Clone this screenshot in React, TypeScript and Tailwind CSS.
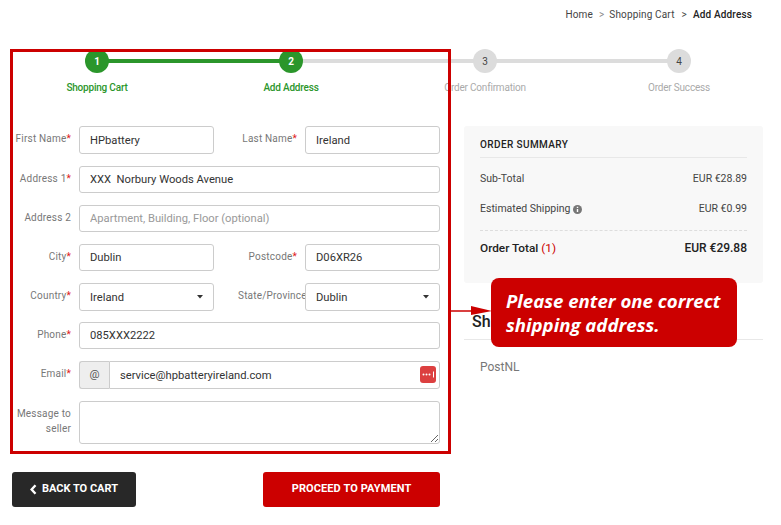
const steps = [
  { n: 1, label: "Shopping Cart", done: true },
  { n: 2, label: "Add Address", done: true },
  { n: 3, label: "Order Confirmation", done: false },
  { n: 4, label: "Order Success", done: false },
];

const inputClass =
  "w-full h-full min-w-0 rounded-[3px] border border-[#ccc] bg-white px-[10px] text-[11.2px] text-[#333] outline-none placeholder:text-[#999]";

const Label = ({ text, required, wide }: { text: string; required?: boolean; wide?: boolean }) => (
  <label
    className={`flex shrink-0 justify-end whitespace-nowrap pt-[3px] pr-2 text-[10px] leading-[20px] tracking-[0.2px] text-[#777] ${wide ? "w-[91px]" : "w-[67px]"}`}
  >
    {text}
    {required && <span className="text-[#e02020]">*</span>}
  </label>
);

const Caret = () => (
  <svg className="pointer-events-none absolute right-[11px] top-[12px]" width="6" height="4" viewBox="0 0 6 4">
    <path d="M0 0h6L3 3.5z" fill="#333" />
  </svg>
);

const Select = ({ value }: { value: string }) => (
  <div className="relative h-full flex-1">
    <select className={`${inputClass} appearance-none pt-[2px]`} defaultValue={value}>
      <option>{value}</option>
    </select>
    <Caret />
  </div>
);

const PasswordKey = () => (
  <svg className="absolute right-[4px] top-[5px]" width="16" height="17" viewBox="0 0 16 17">
    <rect width="16" height="17" rx="3" fill="#dc4040" />
    <circle cx="3.5" cy="8.5" r="1" fill="#fff" />
    <circle cx="6.5" cy="8.5" r="1" fill="#fff" />
    <circle cx="9.5" cy="8.5" r="1" fill="#fff" />
    <path d="M13.5 5.5v6" stroke="#fff" strokeWidth="1" />
  </svg>
);

const InfoDot = () => (
  <svg width="9" height="9" viewBox="0 0 9 9">
    <circle cx="4.5" cy="4.5" r="4.5" fill="#777" />
    <path d="M4.5 1.8v1.2M4.5 3.9v3.2" stroke="#fff" strokeWidth="1.4" />
  </svg>
);

export default function App() {
  return (
    <div className="relative h-[525px] w-[781px] overflow-hidden bg-white font-['Roboto',sans-serif] text-[#333]">
      {/* breadcrumb */}
      <div className="flex h-[27px] items-center justify-end gap-[5px] pr-[29px] pt-px text-[10px] tracking-[0.15px] text-[#444]">
        <span>Home</span>
        <span className="pl-[1px] text-[#888]">&gt;</span>
        <span>Shopping Cart</span>
        <span className="pl-[2px]">&gt;</span>
        <span className="pl-[1px] font-medium text-[#222]">Add Address</span>
      </div>

      {/* stepper */}
      <div className="mt-[22px] grid w-[776px] grid-cols-4">
        {steps.map((s, i) => (
          <div key={s.n} className="relative flex flex-col items-center">
            {i < 3 && (
              <div className={`absolute left-1/2 top-[10px] h-[4px] w-full ${i === 0 ? "bg-[#2b962b]" : "bg-[#dcdcdc]"}`} />
            )}
            <div
              className={`relative flex h-6 w-6 items-center justify-center rounded-full text-[10px] ${s.done ? "bg-[#2b962b] font-bold text-white" : "bg-[#dcdcdc] text-[#444]"}`}
            >
              {s.n}
            </div>
            <div className={`mt-[8px] text-[10px] leading-[13px] tracking-[-0.2px] ${s.done ? "font-medium text-[#2b962b]" : "text-[#aaa]"}`}>
              {s.label}
            </div>
          </div>
        ))}
      </div>

      <div className="mt-[32px] flex">
        {/* address form */}
        <div className="w-[440px] shrink-0 pl-[12px]">
          <div className="flex flex-col gap-3">
            <div className="flex h-[28px]">
              <Label text="First Name" required />
              <input className={`${inputClass} !w-[135px] shrink-0`} defaultValue="HPbattery" />
              <Label text="Last Name" required wide />
              <input className={inputClass} defaultValue="Ireland" />
            </div>
            <div className="flex h-[27px]">
              <Label text="Address 1" required />
              <input className={inputClass} defaultValue="XXX  Norbury Woods Avenue" />
            </div>
            <div className="flex h-[27px]">
              <Label text="Address 2" />
              <input className={inputClass} placeholder="Apartment, Building, Floor (optional)" />
            </div>
            <div className="flex h-[27px]">
              <Label text="City" required />
              <input className={`${inputClass} !w-[135px] shrink-0`} defaultValue="Dublin" />
              <Label text="Postcode" required wide />
              <input className={inputClass} defaultValue="D06XR26" />
            </div>
            <div className="flex h-[28px]">
              <Label text="Country" required />
              <div className="w-[135px]">
                <Select value="Ireland" />
              </div>
              <label className="w-[91px] shrink-0 whitespace-nowrap pl-[24px] pt-[3px] text-[10px] leading-[20px] tracking-[0.2px] text-[#777]">
                State/Province
              </label>
              <Select value="Dublin" />
            </div>
            <div className="-mt-px flex h-[27px]">
              <Label text="Phone" required />
              <input className={inputClass} defaultValue="085XXX2222" />
            </div>
            <div className="flex h-[28px]">
              <Label text="Email" required />
              <div className="flex w-[30px] shrink-0 items-center justify-center rounded-l-[3px] border border-r-0 border-[#ccc] bg-[#eee] text-[11.2px] text-[#555]">
                @
              </div>
              <div className="relative h-full flex-1">
                <input
                  className="h-full w-full rounded-r-[3px] border border-[#ccc] bg-white px-[10px] text-[11.2px] text-[#333] outline-none"
                  defaultValue="service@hpbatteryireland.com"
                />
                <PasswordKey />
              </div>
            </div>
            <div className="flex h-[43px]">
              <label className="w-[67px] shrink-0 pr-2 pt-[5px] text-right text-[10px] leading-[15px] tracking-[0.2px] text-[#777]">
                Message to seller
              </label>
              <textarea className={`${inputClass} block py-1`} />
            </div>
          </div>

          <div className="mt-[28px] flex justify-between">
            <button className="flex h-[35px] w-[124px] items-center justify-center gap-[5px] rounded-[3px] bg-[#282828] text-[11px] font-bold text-white">
              <svg width="7" height="11" viewBox="0 0 7 11">
                <path d="M5.5 1.2 1.6 5.5l3.9 4.3" fill="none" stroke="#fff" strokeWidth="2.4" />
              </svg>
              BACK TO CART
            </button>
            <button className="h-[35px] w-[177px] rounded-[3px] bg-[#cc0000] text-[11px] font-bold tracking-[0.1px] text-white">
              PROCEED TO PAYMENT
            </button>
          </div>
        </div>

        {/* summary */}
        <div className="ml-[24px] w-[299px]">
          <div className="h-[157px] rounded-[3px] bg-[#f8f8f8] px-4 pt-3">
            <div className="border-b border-[#e8e8e8] pb-[5px] text-[10px] font-medium leading-[14px] tracking-[0.4px] text-[#222]">
              ORDER SUMMARY
            </div>
            <div className="mt-[13px] flex justify-between text-[10.5px] leading-[16px] text-[#444]">
              <span>Sub-Total</span>
              <span>EUR €28.89</span>
            </div>
            <div className="mt-[17px] flex justify-between text-[10.5px] leading-[10px] text-[#444]">
              <span className="flex items-center gap-[3px]">
                Estimated Shipping <InfoDot />
              </span>
              <span>EUR €0.99</span>
            </div>
            <div className="mt-[16px] flex justify-between border-t border-dashed border-[#ddd] pt-[8px] text-[11.8px] font-medium leading-[18px] text-[#222]">
              <span>
                Order Total <span className="font-normal text-[#cc0000]">(1)</span>
              </span>
              <span className="text-[12px]">EUR €29.88</span>
            </div>
          </div>
          <div className="mt-[28px] border-b border-[#e8e8e8] pb-[7px] pl-[8px] text-[16px] font-medium leading-[21px] text-[#222]">
            Sh
          </div>
          <div className="mt-[19px] pl-4 text-[12px] leading-[16px] text-[#777]">PostNL</div>
        </div>
      </div>

      {/* annotation */}
      <div className="pointer-events-none absolute left-[10px] top-[49px] h-[405px] w-[441px] border-[3px] border-[#cc0000]" />
      <svg className="absolute left-[451px] top-[305px]" width="41" height="12" viewBox="0 0 41 12">
        <path d="M0 6h22" stroke="#cc0000" strokeWidth="1.5" />
        <path d="M20 1l21 5-21 4z" fill="#cc0000" />
      </svg>
      <div className="absolute left-[491px] top-[278px] flex h-[69px] w-[246px] items-center rounded-[8px] bg-[#cc0000] pl-[15px] font-['Open_Sans',sans-serif] text-[18.6px] font-bold italic leading-[24px] text-white">
        <span>
          Please enter one correct
          <br />
          shipping address.
        </span>
      </div>
    </div>
  );
}
